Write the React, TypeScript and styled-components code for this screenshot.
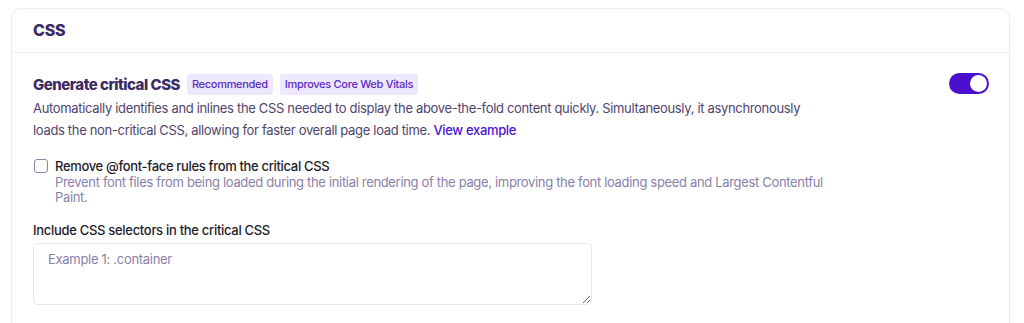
import React, { useState } from "react";
import styled, { createGlobalStyle } from "styled-components";

const Global = createGlobalStyle`
  html, body { margin: 0; padding: 0; background: #ffffff; }
  body { font-family: Inter, "Noto Sans", sans-serif; -webkit-font-smoothing: antialiased; }
  * { box-sizing: border-box; }
`;

const Page = styled.div`
  padding: 8px 14px 0 11px;
`;

const Card = styled.section`
  border: 1px solid #ececf1;
  border-radius: 10px;
  background: #fff;
  overflow: hidden;
`;

const CardHeader = styled.header`
  height: 44px;
  display: flex;
  align-items: center;
  padding: 0 21px;
  border-bottom: 1px solid #ececf1;
`;

const HeaderTitle = styled.h2`
  margin: 0 0 1px;
  font-size: 16px;
  font-weight: 800;
  letter-spacing: -0.2px;
  color: #3b2a63;
`;

const CardBody = styled.div`
  padding: 20px 20px 28px 21px;
`;

const SettingRow = styled.div`
  display: flex;
  justify-content: space-between;
  align-items: flex-start;
`;

const SettingMain = styled.div`
  max-width: 800px;
`;

const TitleLine = styled.div`
  display: flex;
  align-items: center;
  gap: 7px;
  height: 22px;
`;

const SettingTitle = styled.h3`
  margin: 0;
  font-size: 15px;
  font-weight: 800;
  letter-spacing: -0.5px;
  color: #3b2a63;
`;

const Badge = styled.span`
  display: inline-flex;
  align-items: center;
  height: 21px;
  padding: 0 5px;
  border-radius: 3px;
  background: #ede8fd;
  color: #5b2bc4;
  font-size: 11px;
  letter-spacing: -0.3px;
  font-weight: 500;
`;

const Description = styled.p`
  margin: 2px 0 0;
  font-size: 13px;
  letter-spacing: -0.33px;
  line-height: 22px;
  color: #4f446f;
`;

const Link = styled.a`
  color: #4d12d0;
  text-decoration: none;
  font-weight: 500;
`;

const Toggle = styled.button<{ $on: boolean }>`
  position: relative;
  width: 40px;
  height: 21px;
  margin: 0;
  border-radius: 11px;
  border: none;
  padding: 0;
  background: ${(p) => (p.$on ? "#4a0fcc" : "#d6d2e0")};
  cursor: pointer;
  flex-shrink: 0;
  &::after {
    content: "";
    position: absolute;
    top: 2px;
    left: ${(p) => (p.$on ? "21px" : "2px")};
    width: 17px;
    height: 17px;
    border-radius: 50%;
    background: #fff;
  }
`;

const CheckOption = styled.label`
  display: flex;
  gap: 7px;
  margin-top: 17px;
  cursor: pointer;
`;

const CheckBox = styled.input`
  appearance: none;
  width: 14px;
  height: 14px;
  margin: 1px 0 0 1px;
  border: 1.5px solid #8e84a6;
  border-radius: 3px;
  flex-shrink: 0;
  &:checked {
    background: #4a0fcc;
    border-color: #4a0fcc;
  }
`;

const CheckText = styled.div`
  display: flex;
  flex-direction: column;
`;

const CheckLabel = styled.span`
  font-size: 13px;
  letter-spacing: -0.33px;
  line-height: 17px;
  font-weight: 500;
  color: #1e1b29;
`;

const CheckHelp = styled.span`
  font-size: 13px;
  letter-spacing: -0.33px;
  line-height: 15px;
  color: #8a7fa8;
`;

const Field = styled.div`
  margin-top: 17px;
  display: flex;
  flex-direction: column;
  gap: 4px;
`;

const FieldLabel = styled.label`
  font-size: 13px;
  letter-spacing: -0.3px;
  font-weight: 500;
  line-height: 17px;
  color: #1e1b29;
`;

const TextArea = styled.textarea`
  width: 559px;
  height: 62px;
  padding: 7px 14px;
  border: 1px solid #e9e7ee;
  border-radius: 4px;
  font-family: Inter, "Noto Sans", sans-serif;
  font-size: 13px;
  letter-spacing: -0.3px;
  color: #1e1b29;
  outline: none;
  &::placeholder {
    color: #8a7fa8;
  }
`;

export default function App() {
  const [on, setOn] = useState(true);
  const [removeFonts, setRemoveFonts] = useState(false);
  return (
    <>
      <Global />
      <Page>
        <Card>
          <CardHeader>
            <HeaderTitle>CSS</HeaderTitle>
          </CardHeader>
          <CardBody>
            <SettingRow>
              <SettingMain>
                <TitleLine>
                  <SettingTitle>Generate critical CSS</SettingTitle>
                  <Badge>Recommended</Badge>
                  <Badge>Improves Core Web Vitals</Badge>
                </TitleLine>
                <Description>
                  Automatically identifies and inlines the CSS needed to display the above-the-fold content
                  quickly. Simultaneously, it asynchronously loads the non-critical CSS, allowing for faster
                  overall page load time. <Link href="#">View example</Link>
                </Description>
                <CheckOption>
                  <CheckBox
                    type="checkbox"
                    checked={removeFonts}
                    onChange={(e) => setRemoveFonts(e.target.checked)}
                  />
                  <CheckText>
                    <CheckLabel>Remove @font-face rules from the critical CSS</CheckLabel>
                    <CheckHelp>
                      Prevent font files from being loaded during the initial rendering of the page, improving
                      the font loading speed and Largest Contentful Paint.
                    </CheckHelp>
                  </CheckText>
                </CheckOption>
                <Field>
                  <FieldLabel htmlFor="sel">Include CSS selectors in the critical CSS</FieldLabel>
                  <TextArea id="sel" placeholder="Example 1: .container" />
                </Field>
              </SettingMain>
              <Toggle $on={on} onClick={() => setOn(!on)} aria-label="Generate critical CSS" />
            </SettingRow>
          </CardBody>
        </Card>
      </Page>
    </>
  );
}
